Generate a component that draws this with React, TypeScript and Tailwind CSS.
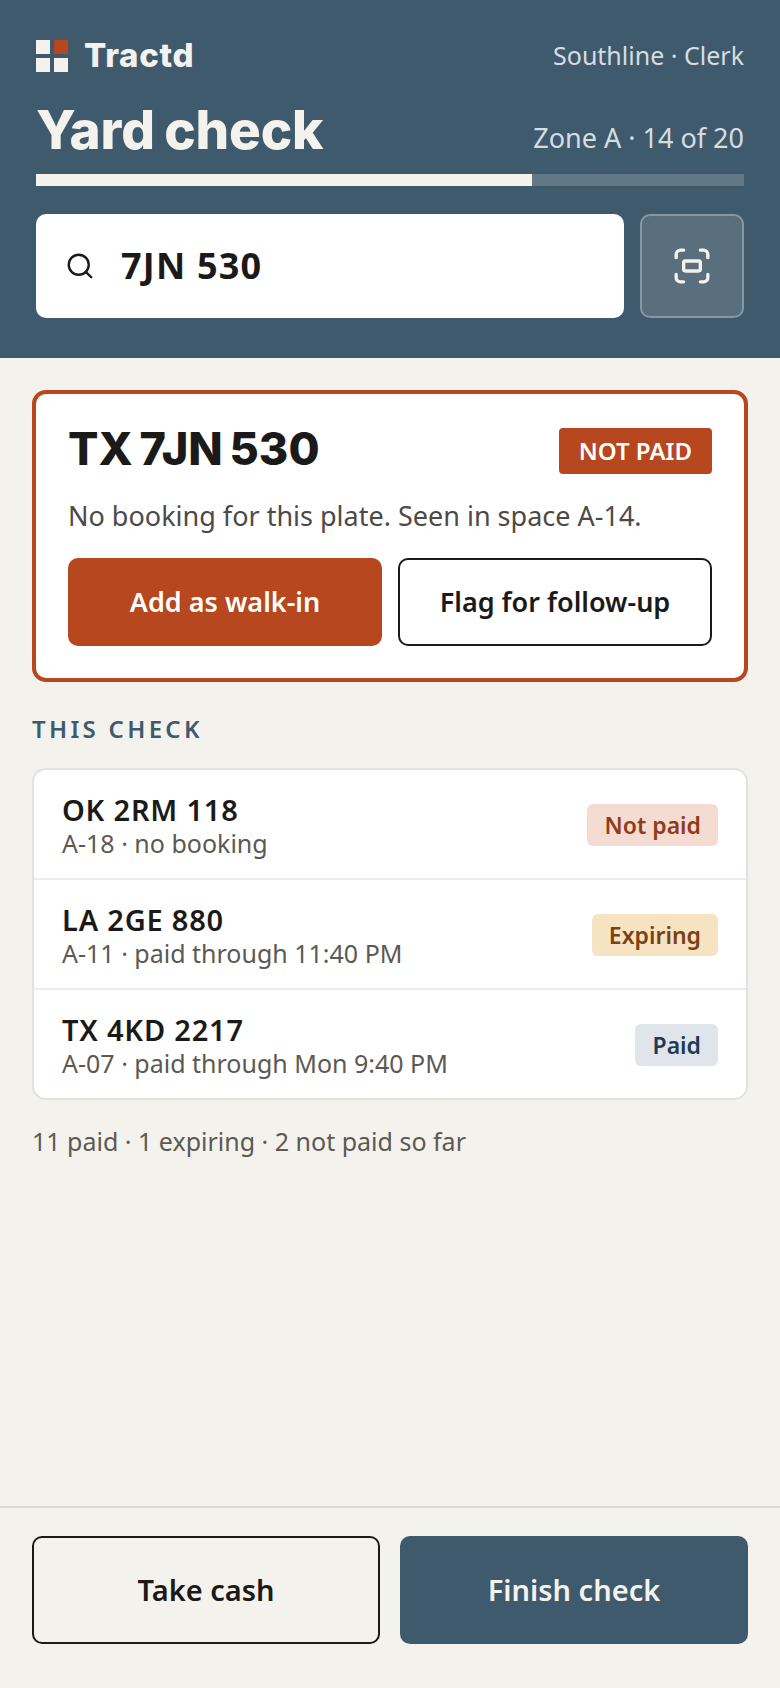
import { Search } from "lucide-react";

const body = "font-['Noto_Sans',sans-serif]";
const head = "font-['Inter',sans-serif]";

type Row = {
  plate: string;
  detail: string;
  status: string;
  badge: string;
};

const rows: Row[] = [
  {
    plate: "OK 2RM 118",
    detail: "A-18 · no booking",
    status: "Not paid",
    badge: "bg-[#f4dcd3] text-[#8f3c17]",
  },
  {
    plate: "LA 2GE 880",
    detail: "A-11 · paid through 11:40 PM",
    status: "Expiring",
    badge: "bg-[#f6e3c2] text-[#7a4213]",
  },
  {
    plate: "TX 4KD 2217",
    detail: "A-07 · paid through Mon 9:40 PM",
    status: "Paid",
    badge: "bg-[#dfe5ea] text-[#1f3a56]",
  },
];

function Logo() {
  return (
    <div className="grid grid-cols-[14px_14px] grid-rows-[14px_14px] gap-1">
      <span className="bg-[#f4f2ed]" />
      <span className="bg-[#b7471e]" />
      <span className="bg-[#f4f2ed]" />
      <span className="bg-[#f4f2ed]" />
    </div>
  );
}

function ScanIcon() {
  return (
    <svg
      width="40"
      height="40"
      viewBox="0 0 24 24"
      fill="none"
      stroke="#f4f2ed"
      strokeWidth="2"
      strokeLinecap="round"
      strokeLinejoin="round"
    >
      <path d="M2.5 7V5a2.5 2.5 0 0 1 2.5-2.5h2" />
      <path d="M17 2.5h2a2.5 2.5 0 0 1 2.5 2.5v2" />
      <path d="M21.5 17v2a2.5 2.5 0 0 1-2.5 2.5h-2" />
      <path d="M7 21.5H5A2.5 2.5 0 0 1 2.5 19v-2" />
      <rect x="7" y="9" width="10" height="6" rx="1" />
    </svg>
  );
}

export default function App() {
  return (
    <div className={`${body} w-[780px] h-[1688px] flex flex-col bg-[#f4f2ed] text-[#1c1a18]`}>
      <header className="bg-[#3f5a6d] px-9 pt-10 pb-10 h-[358px] shrink-0">
        <div className="flex items-center justify-between h-8">
          <div className="flex items-center gap-4">
            <Logo />
            <span className={`${head} text-[33px] font-extrabold tracking-[0.7px] text-[#f4f2ed]`}>Tractd</span>
          </div>
          <span className="text-[25px] text-[#d5dde3]">Southline · Clerk</span>
        </div>

        <div className="flex items-end justify-between mt-[30px] h-[56px]">
          <h1 className={`${head} text-[53px] leading-[56px] font-extrabold tracking-[-0.2px] [word-spacing:-2px] text-[#f4f2ed]`}>
            Yard check
          </h1>
          <span className="text-[27px] text-[#d5dde3]">Zone A · 14 of 20</span>
        </div>

        <div className="mt-[16px] h-3 bg-[#627886]">
          <div className="h-full w-[70%] bg-[#f4f2ed]" />
        </div>

        <div className="flex gap-4 mt-7">
          <div className="flex-1 h-[104px] bg-white rounded-[10px] flex items-center pl-[29px] gap-[26px]">
            <Search size={30} strokeWidth={1.9} className="text-[#1c1a18]" />
            <span className="text-[36px] font-bold tracking-[1.2px]">7JN 530</span>
          </div>
          <button className="w-[104px] h-[104px] rounded-[10px] border-2 border-[#8798a5] bg-[#5a6f7d] flex items-center justify-center">
            <ScanIcon />
          </button>
        </div>
      </header>

      <main className="flex-1 px-8 pt-8">
        <section className="bg-white border-4 border-[#b7471e] rounded-[14px] px-8 pt-[34px] h-[292px]">
          <div className="flex items-start justify-between">
            <h2 className={`${head} text-[45px] leading-[42px] font-extrabold [word-spacing:-3px]`}>
              TX 7JN 530
            </h2>
            <span className="bg-[#b7471e] text-white text-[24px] font-semibold rounded-[4px] h-[46px] px-5 flex items-center">
              NOT PAID
            </span>
          </div>
          <p className="mt-[22px] text-[27px] leading-[40px] text-[#4d4a46]">
            No booking for this plate. Seen in space A-14.
          </p>
          <div className="grid grid-cols-2 gap-4 mt-[22px]">
            <button className="h-[88px] rounded-[10px] bg-[#b7471e] text-white text-[27px] font-semibold">
              Add as walk-in
            </button>
            <button className="h-[88px] rounded-[10px] border-2 border-[#1c1a18] bg-white text-[27px] font-semibold">
              Flag for follow-up
            </button>
          </div>
        </section>

        <h3 className="mt-[32px] text-[24px] leading-[30px] font-semibold tracking-[3.3px] text-[#3f5a6d]">THIS CHECK</h3>

        <div className="mt-[24px] bg-white border-2 border-[#e0e3e6] rounded-[14px]">
          {rows.map((row, i) => (
            <div
              key={row.plate}
              className={`px-[28px] flex items-center justify-between ${i > 0 ? "h-[110px] border-t-2 border-[#ecedee]" : "h-[108px]"}`}
            >
              <div className="pt-[4px]">
                <div className="text-[29px] leading-[34px] font-semibold tracking-[0.8px]">{row.plate}</div>
                <div className="text-[25px] leading-[33px] text-[#5c5953]">{row.detail}</div>
              </div>
              <span className={`${row.badge} mt-[2px] text-[23px] font-semibold rounded-[6px] h-[42px] px-[17px] flex items-center`}>
                {row.status}
              </span>
            </div>
          ))}
        </div>

        <p className="mt-[23px] text-[25px] leading-[36px] text-[#5c5953]">11 paid · 1 expiring · 2 not paid so far</p>
      </main>

      <footer className="h-[182px] shrink-0 border-t-2 border-[#dbd9d4] px-8 pt-[28px] grid grid-cols-2 gap-5">
        <button className="h-[108px] rounded-[10px] border-2 border-[#1c1a18] text-[29px] font-semibold">
          Take cash
        </button>
        <button className="h-[108px] rounded-[10px] bg-[#3f5a6d] text-[#f4f2ed] text-[29px] font-semibold">
          Finish check
        </button>
      </footer>
    </div>
  );
}
